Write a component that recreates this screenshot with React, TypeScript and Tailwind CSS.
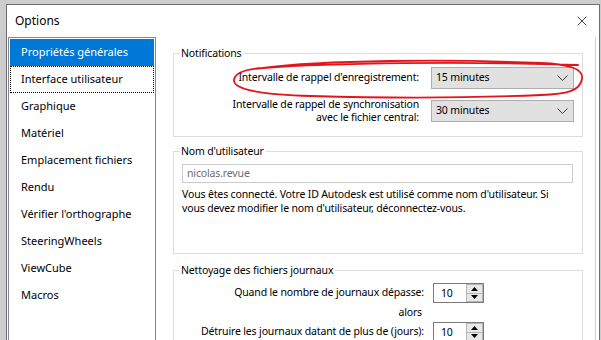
import { X } from "lucide-react";

const sections = [
  "Propriétés générales",
  "Interface utilisateur",
  "Graphique",
  "Matériel",
  "Emplacement fichiers",
  "Rendu",
  "Vérifier l'orthographe",
  "SteeringWheels",
  "ViewCube",
  "Macros",
];

const Chevron = () => (
  <svg width="11" height="6" viewBox="0 0 11 6" fill="none" stroke="#3c3c3c" strokeWidth="1">
    <path d="M0.5 0.5 L5.5 5.5 L10.5 0.5" />
  </svg>
);

const DropBox = ({ value }: { value: string }) => (
  <div className="h-[22px] border border-[#adadad] bg-[#e1e1e1] flex items-center justify-between pl-[4px] pr-[5px]">
    <span>{value}</span>
    <Chevron />
  </div>
);

const Spinner = ({ value }: { value: number }) => (
  <div className="h-[20px] border border-[#7a7a7a] bg-white flex items-stretch">
    <span className="flex-1 pl-[7px] leading-[18px]">{value}</span>
    <div className="w-[17px] flex flex-col">
      <div className="flex-1 bg-[#e8e8e8] border border-[#b5b5b5] flex items-center justify-center">
        <svg width="7" height="4" viewBox="0 0 7 4"><path d="M0 4 L3.5 0 L7 4 Z" fill="#000" /></svg>
      </div>
      <div className="flex-1 bg-[#e8e8e8] border border-t-0 border-[#b5b5b5] flex items-center justify-center">
        <svg width="7" height="4" viewBox="0 0 7 4"><path d="M0 0 L3.5 4 L7 0 Z" fill="#000" /></svg>
      </div>
    </div>
  </div>
);

export default function App() {
  return (
    <div className="w-[601px] h-[340px] bg-[#cdcdcd] pt-[4px] pl-[6px] overflow-hidden font-['Noto_Sans',sans-serif] text-[11px] text-black">
      <div className="relative h-[400px] w-[594px] border-l border-t border-r border-[#6e6e6e] bg-white flex flex-col">
        <div className="h-[32px] flex items-center justify-between pl-[8px] pr-[9px] shrink-0">
          <span className="text-[12px]">Options</span>
          <X size={16} strokeWidth={1.2} color="#111" />
        </div>

        <div className="flex flex-1 min-h-0">
          <ul className="ml-[1px] w-[148px] border border-[#828790] p-[1px]">
            {sections.map((s, i) => (
              <li
                key={s}
                className={`h-[27px] flex items-center pl-[10px] border ${
                  i === 0
                    ? "bg-[#0078d7] text-white border-[#0078d7]"
                    : i === 1
                    ? "border-dotted border-black"
                    : "border-transparent"
                }`}
              >
                {s}
              </li>
            ))}
          </ul>

          <div className="flex-1 mr-[3px] border-r border-[#cfcfcf] pl-[17px] pr-[12px] pt-[8px] text-[10.5px] tracking-[-0.15px]">
            <fieldset className="border border-[#dcdcdc] pb-[12px]">
              <legend className="ml-[5px] px-[2px] leading-[16px]">Notifications</legend>
              <div className="grid grid-cols-[1fr_143px] gap-x-[12px] gap-y-[9px] items-center pr-[8px] pt-[6px]">
                <span className="text-right">Intervalle de rappel d'enregistrement:</span>
                <DropBox value="15 minutes" />
                <span className="text-right leading-[13px]">
                  Intervalle de rappel de synchronisation
                  <br />
                  avec le fichier central:
                </span>
                <DropBox value="30 minutes" />
              </div>
            </fieldset>

            <fieldset className="mt-[6px] border border-[#dcdcdc] pl-[8px] pr-[9px] pb-[38px]">
              <legend className="-ml-[3px] px-[2px] leading-[16px]">Nom d'utilisateur</legend>
              <div className="mt-[5px] h-[19px] border border-[#cccccc] pl-[4px] leading-[17px] text-[#6d6d6d]">
                nicolas.revue
              </div>
              <p className="mt-[4px] leading-[14px]">
                Vous êtes connecté. Votre ID Autodesk est utilisé comme nom d'utilisateur. Si vous devez modifier le nom
                d'utilisateur, déconnectez-vous.
              </p>
            </fieldset>

            <fieldset className="mt-[8px] border border-[#dcdcdc] pb-[20px]">
              <legend className="ml-[5px] px-[2px] leading-[16px]">Nettoyage des fichiers journaux</legend>
              <div className="grid grid-cols-[1fr_51px] gap-x-[9px] items-center pr-[98px] pt-[5px]">
                <span className="text-right">Quand le nombre de journaux dépasse:</span>
                <Spinner value={10} />
                <span className="text-right leading-[19px] pr-[2px]">alors</span>
                <span />
                <span className="text-right">Détruire les journaux datant de plus de (jours):</span>
                <Spinner value={10} />
              </div>
            </fieldset>
          </div>
        </div>

        <svg
          className="absolute left-[-6px] top-[-4px] pointer-events-none"
          width="601"
          height="340"
          viewBox="0 0 601 340"
          fill="none"
          stroke="#e3141c"
          strokeWidth="1.8"
          strokeLinecap="round"
        >
          <path d="M262 67 C320 59 450 58 540 62 C565 63 583 67 581 78 C579 90 566 93 540 94 C470 97 380 97 310 95 C265 94 232 89 233 79 C234 71 246 68 262 67 C330 62 460 60 577 64" />
        </svg>
      </div>
    </div>
  );
}
